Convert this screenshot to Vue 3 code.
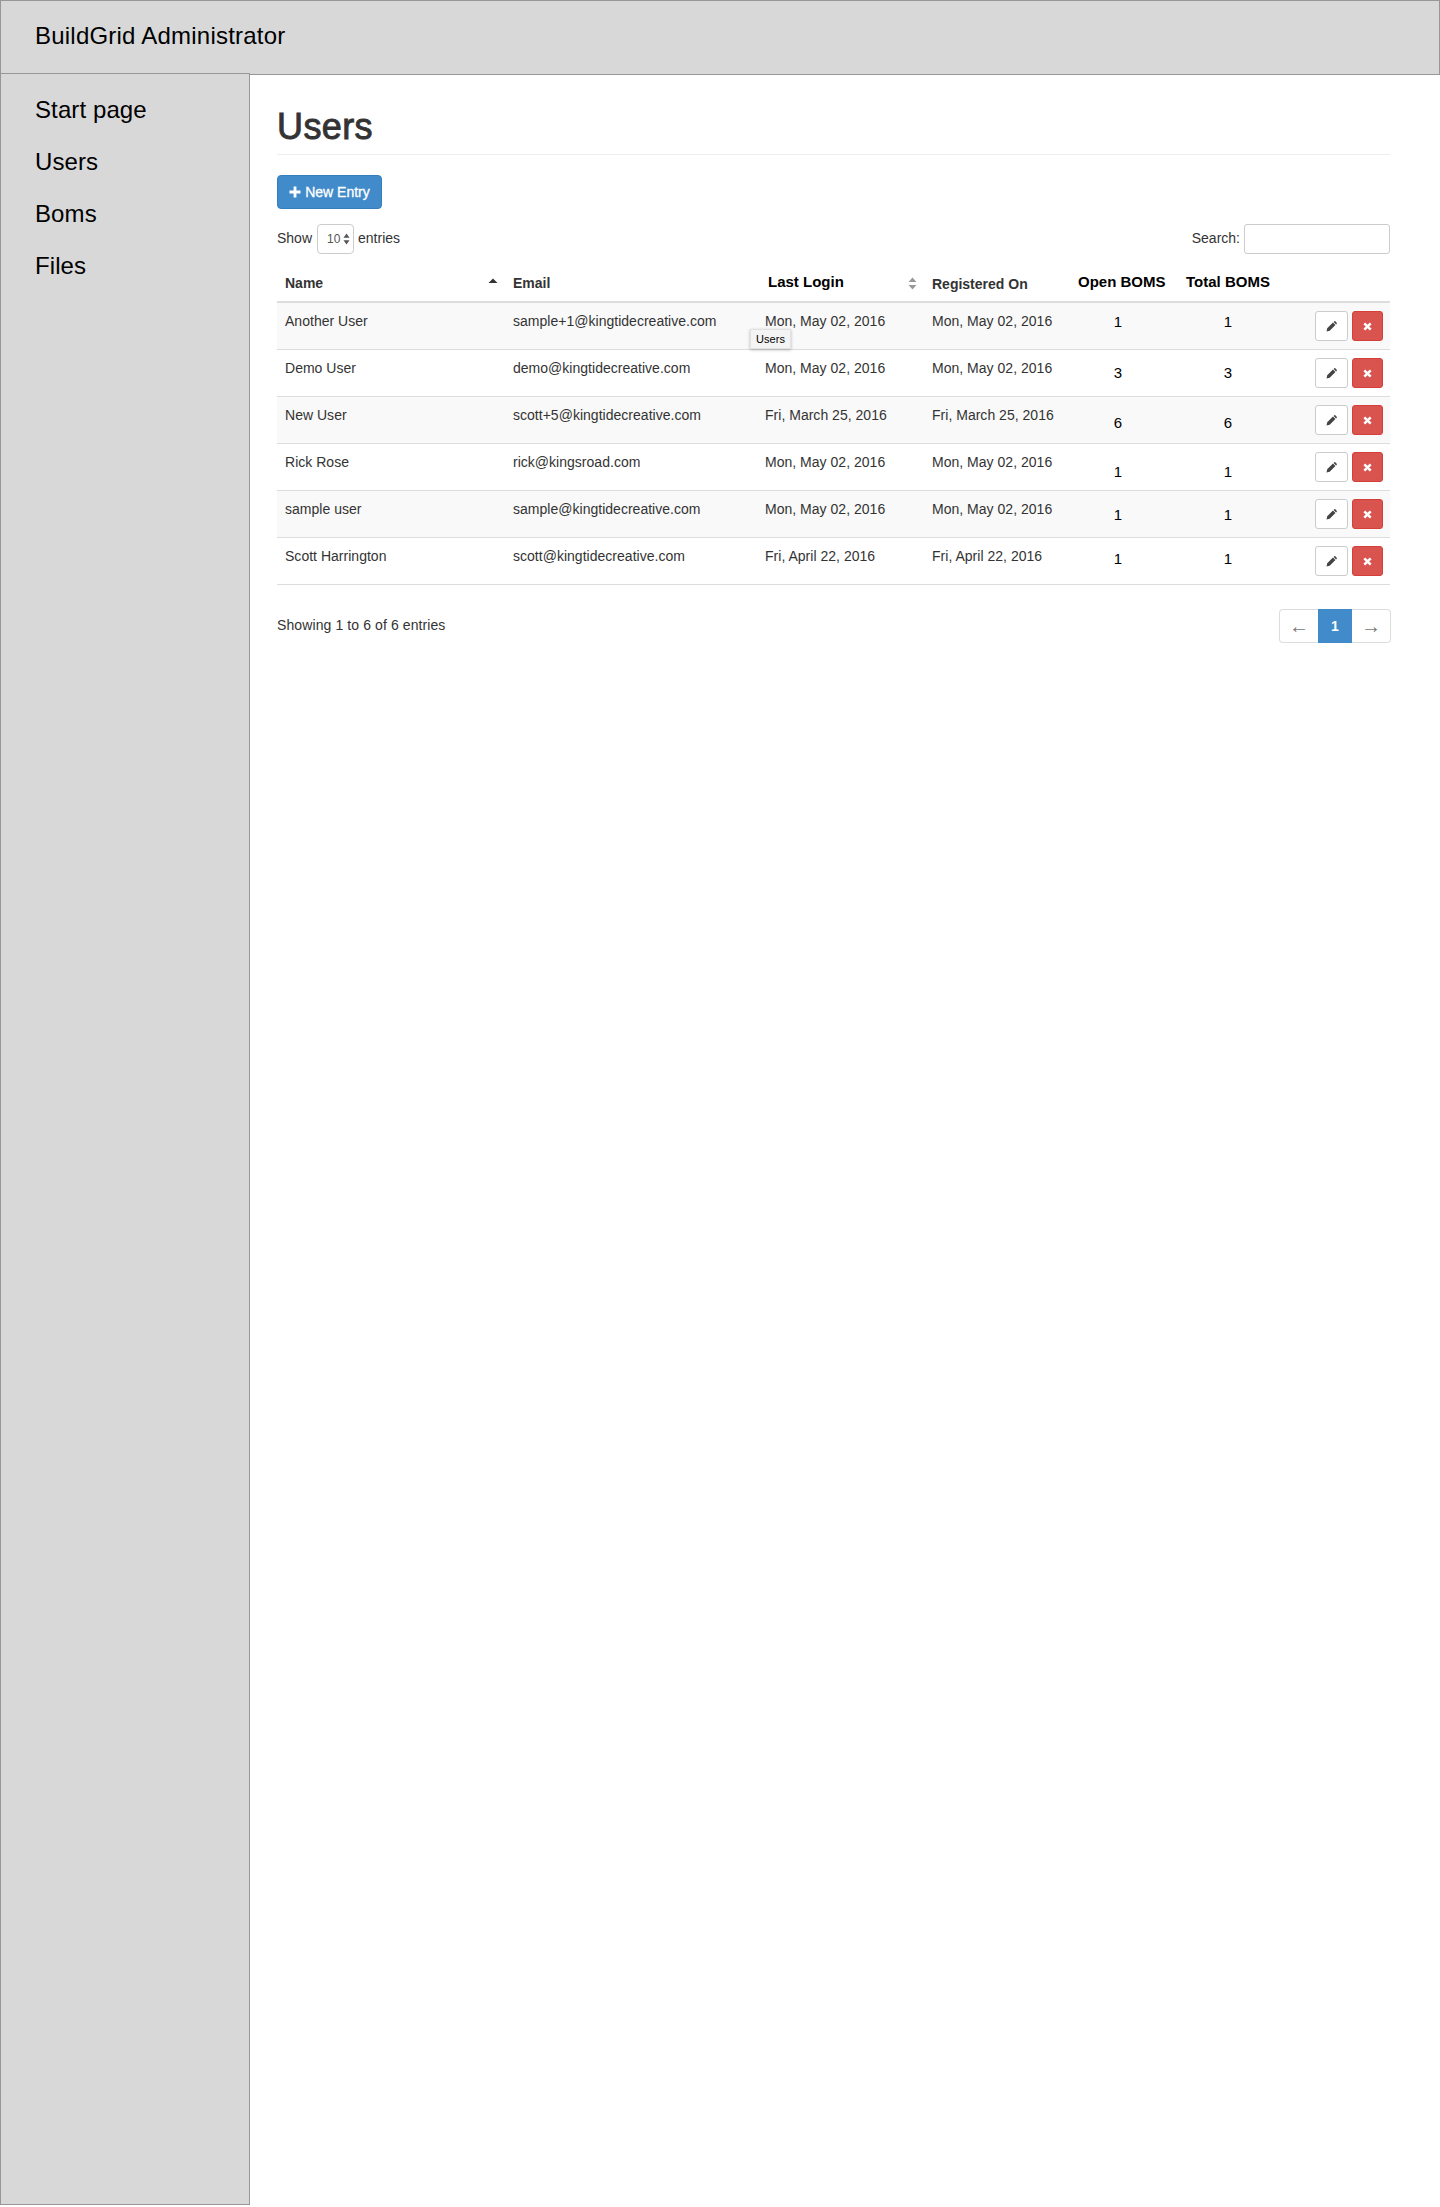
<script setup>
const users = [
  { name: 'Another User', email: 'sample+1@kingtidecreative.com', login: 'Mon, May 02, 2016', reg: 'Mon, May 02, 2016', open: 1, total: 1, shift: 0 },
  { name: 'Demo User', email: 'demo@kingtidecreative.com', login: 'Mon, May 02, 2016', reg: 'Mon, May 02, 2016', open: 3, total: 3, shift: 4 },
  { name: 'New User', email: 'scott+5@kingtidecreative.com', login: 'Fri, March 25, 2016', reg: 'Fri, March 25, 2016', open: 6, total: 6, shift: 7 },
  { name: 'Rick Rose', email: 'rick@kingsroad.com', login: 'Mon, May 02, 2016', reg: 'Mon, May 02, 2016', open: 1, total: 1, shift: 9 },
  { name: 'sample user', email: 'sample@kingtidecreative.com', login: 'Mon, May 02, 2016', reg: 'Mon, May 02, 2016', open: 1, total: 1, shift: 5 },
  { name: 'Scott Harrington', email: 'scott@kingtidecreative.com', login: 'Fri, April 22, 2016', reg: 'Fri, April 22, 2016', open: 1, total: 1, shift: 2 }
]
const nav = ['Start page', 'Users', 'Boms', 'Files']
</script>

<template>
  <div class="page">
    <header class="topbar">BuildGrid Administrator</header>
    <div class="body">
      <aside class="sidebar">
        <a v-for="item in nav" :key="item" class="nav-item">{{ item }}</a>
      </aside>
      <main class="main">
        <div class="page-header"><h1>Users</h1></div>
        <button class="new-btn">
          <svg width="12" height="12" viewBox="0 0 12 12"><path d="M4.6 0.5h2.8v4.1h4.1v2.8H7.4v4.1H4.6V7.4H0.5V4.6h4.1z" fill="#fff" /></svg>
          <span>New Entry</span>
        </button>
        <div class="controls">
          <div class="length">
            <span>Show</span>
            <div class="select">
              <span>10</span>
              <svg width="7" height="12" viewBox="0 0 7 12"><path d="M3.5 0.5L6.5 4.8H0.5z M3.5 11.5L0.5 7.2H6.5z" fill="#555" /></svg>
            </div>
            <span>entries</span>
          </div>
          <label class="search">
            <span>Search:</span>
            <input type="text" />
          </label>
        </div>
        <table class="table">
          <colgroup>
            <col style="width: 228px" />
            <col style="width: 251px" />
            <col style="width: 168px" />
            <col style="width: 146px" />
            <col style="width: 108px" />
            <col style="width: 100px" />
            <col style="width: 112px" />
          </colgroup>
          <thead>
            <tr>
              <th class="th-sort">
                Name
                <svg class="sort sort-name" width="10" height="6" viewBox="0 0 10 6"><path d="M5 0.5L9.5 5H0.5z" fill="#333" /></svg>
              </th>
              <th>Email</th>
              <th class="th-sort th-login">
                Last Login
                <svg class="sort sort-login" width="9" height="13" viewBox="0 0 9 13"><path d="M4.5 0.5L8.5 5H0.5z M4.5 12.5L0.5 8H8.5z" fill="#999" /></svg>
              </th>
              <th class="th-reg">Registered On</th>
              <th class="th-dark">Open BOMS</th>
              <th class="th-dark th-total">Total BOMS</th>
              <th></th>
            </tr>
          </thead>
          <tbody>
            <tr v-for="(u, i) in users" :key="u.email" :class="{ odd: i % 2 === 0 }">
              <td>{{ u.name }}</td>
              <td>{{ u.email }}</td>
              <td class="td-login">
                {{ u.login }}
                <span v-if="i === 0" class="tooltip">Users</span>
              </td>
              <td>{{ u.reg }}</td>
              <td class="num num-open" :style="{ paddingTop: 9 + u.shift + 'px' }">{{ u.open }}</td>
              <td class="num" :style="{ paddingTop: 9 + u.shift + 'px' }">{{ u.total }}</td>
              <td class="actions">
                <div class="action-group">
                  <button class="btn-edit" aria-label="Edit">
                    <svg width="11" height="11" viewBox="0 0 12 12"><path d="M0.6 11.4L1.3 8L7.6 1.7L10.3 4.4L4 10.7z M8.3 1L9.1 0.3C9.4 0 9.8 0 10.1 0.3L11.7 1.9C12 2.2 12 2.6 11.7 2.9L11 3.7z" fill="#444" /></svg>
                  </button>
                  <button class="btn-del" aria-label="Delete">
                    <svg width="9" height="9" viewBox="0 0 9 9"><path d="M1.3 1.3L7.7 7.7M7.7 1.3L1.3 7.7" stroke="#fff" stroke-width="2.5" fill="none" /></svg>
                  </button>
                </div>
              </td>
            </tr>
          </tbody>
        </table>
        <div class="footer">
          <span class="info">Showing 1 to 6 of 6 entries</span>
          <div class="pager">
            <a class="pg pg-prev">←</a>
            <a class="pg pg-active">1</a>
            <a class="pg pg-next">→</a>
          </div>
        </div>
      </main>
    </div>
  </div>
</template>

<style scoped>
.page {
  width: 1440px;
  height: 2207px;
  background: #fff;
  font-family: "Liberation Sans", Arial, sans-serif;
  font-size: 14px;
  line-height: 20px;
  color: #333;
  overflow: hidden;
}
.topbar {
  box-sizing: border-box;
  height: 75px;
  padding: 0 0 3px 34px;
  display: flex;
  align-items: center;
  background: #d8d8d8;
  border: 1px solid #979797;
  font-size: 24px;
  letter-spacing: 0.22px;
  color: #000;
}
.body {
  display: flex;
  align-items: flex-start;
}
.sidebar {
  box-sizing: border-box;
  flex: none;
  width: 250px;
  height: 2132px;
  margin-top: -2px;
  padding: 10px 0 0 34px;
  display: flex;
  flex-direction: column;
  background: #d8d8d8;
  border: 1px solid #979797;
  position: relative;
}
.nav-item {
  height: 52px;
  line-height: 52px;
  font-size: 24px;
  letter-spacing: 0.1px;
  color: #000;
}
.main {
  box-sizing: border-box;
  flex: 1;
  min-width: 0;
  padding: 30px 50px 0 27px;
}
.page-header {
  padding-top: 2px;
  padding-bottom: 7px;
  border-bottom: 1px solid #eee;
  margin-bottom: 20px;
}
h1 {
  margin: 0;
  font-size: 36px;
  line-height: 40px;
  font-weight: 500;
  color: #333;
  letter-spacing: 0.4px;
  -webkit-text-stroke: 0.9px #333;
}
.new-btn {
  box-sizing: border-box;
  height: 34px;
  width: 105px;
  padding: 0;
  display: flex;
  align-items: center;
  justify-content: center;
  gap: 4px;
  background: #428bca;
  border: 1px solid #357ebd;
  border-radius: 4px;
  color: #fff;
  font: 14px "Liberation Sans", Arial, sans-serif;
  -webkit-text-stroke: 0.3px #fff;
}
.controls {
  margin-top: 15px;
  height: 30px;
  display: flex;
  justify-content: space-between;
  align-items: center;
}
.length {
  display: flex;
  align-items: center;
  gap: 4px;
}
.length > span,
.search > span {
  margin-top: -2px;
}
.select {
  box-sizing: border-box;
  width: 37px;
  height: 30px;
  margin-left: 1px;
  padding: 0 3px 0 9px;
  display: flex;
  align-items: center;
  justify-content: space-between;
  border: 1px solid #ccc;
  border-radius: 4px;
  font-size: 12px;
  color: #555;
}
.search {
  display: flex;
  align-items: center;
  gap: 4px;
}
.search input {
  box-sizing: border-box;
  width: 146px;
  height: 30px;
  border: 1px solid #ccc;
  border-radius: 3px;
  background: #fff;
  outline: none;
}
.table {
  width: 1113px;
  margin-top: 11px;
  table-layout: fixed;
  border-collapse: separate;
  border-spacing: 0;
}
th {
  padding: 8px;
  text-align: left;
  font-weight: bold;
  color: #333;
  border-bottom: 2px solid #ddd;
  white-space: nowrap;
  position: relative;
}
.th-login {
  padding: 7px 8px 9px 12px;
  font-size: 15px;
  color: #000;
}
.th-reg {
  padding-top: 9px;
  padding-bottom: 7px;
}
.th-dark {
  padding-top: 7px;
  padding-bottom: 9px;
  font-size: 15px;
  color: #000;
}
.th-total {
  text-align: center;
}
.sort {
  position: absolute;
  display: block;
}
.sort-name {
  right: 7px;
  top: 13px;
}
.sort-login {
  right: 7px;
  top: 12px;
}
td {
  box-sizing: border-box;
  height: 47px;
  padding: 8px;
  vertical-align: top;
  border-bottom: 1px solid #ddd;
  white-space: nowrap;
  letter-spacing: 0.02px;
}
.odd td {
  background: #f9f9f9;
}
.td-login {
  padding-left: 9px;
  position: relative;
}
.num {
  text-align: center;
  font-size: 15px;
  color: #000;
}
.num-open {
  padding-left: 9px;
  padding-right: 21px;
}
.actions {
  padding-right: 7px;
}
.action-group {
  display: flex;
  justify-content: flex-end;
  gap: 4px;
}
.action-group button {
  box-sizing: border-box;
  height: 30px;
  padding: 0;
  display: flex;
  align-items: center;
  justify-content: center;
  border-radius: 3px;
}
.btn-edit {
  width: 33px;
  background: #fff;
  border: 1px solid #ccc;
}
.btn-del {
  width: 31px;
  background: #d9534f;
  border: 1px solid #d43f3a;
}
.tooltip {
  position: absolute;
  left: -6px;
  top: 26px;
  box-sizing: border-box;
  width: 41px;
  height: 20px;
  display: flex;
  align-items: center;
  justify-content: center;
  background: #f4f4f4;
  border: 1px solid #e2e2e2;
  box-shadow: 0 1px 3px rgba(0, 0, 0, 0.25);
  font-size: 11px;
  color: #000;
}
.footer {
  margin-top: 24px;
  height: 34px;
  display: flex;
  justify-content: space-between;
  align-items: center;
}
.info {
  margin-top: -2px;
  letter-spacing: 0.1px;
}
.pager {
  margin-right: -1px;
  display: flex;
  height: 34px;
}
.pg {
  box-sizing: border-box;
  height: 34px;
  display: flex;
  align-items: center;
  justify-content: center;
  border: 1px solid #ddd;
  color: #777;
  font-size: 20px;
}
.pg-prev {
  width: 39px;
  border-right: none;
  border-radius: 4px 0 0 4px;
}
.pg-active {
  width: 34px;
  background: #428bca;
  border-color: #428bca;
  color: #fff;
  font-size: 14px;
  font-weight: bold;
}
.pg-next {
  width: 39px;
  border-left: none;
  border-radius: 0 4px 4px 0;
}
</style>
